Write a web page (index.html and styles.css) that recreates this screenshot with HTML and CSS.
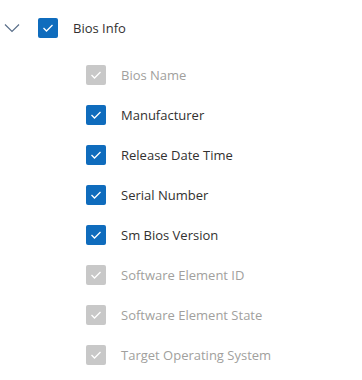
FILE: index.html
```html
<!DOCTYPE html>
<html lang="en">
<head>
  <meta charset="UTF-8">
  <title>Bios Info</title>
  <link rel="stylesheet" href="styles.css">
</head>
<body>
  <div class="tree">
    <div class="row root">
      <span class="chevron">
        <svg width="16" height="10" viewBox="0 0 16 10"><path d="M1 1.5 L8 8.5 L15 1.5" fill="none" stroke="#5a6f8a" stroke-width="1.2"/></svg>
      </span>
      <span class="box on"><svg width="12" height="10" viewBox="0 0 12 10"><path d="M1.5 5 L4.5 8 L10.5 2" fill="none" stroke="#fff" stroke-width="1.3"/></svg></span>
      <span class="label">Bios Info</span>
    </div>
    <div class="children">
      <div class="row off"><span class="box"><svg width="12" height="10" viewBox="0 0 12 10"><path d="M1.5 5 L4.5 8 L10.5 2" fill="none" stroke="#fff" stroke-width="1.3"/></svg></span><span class="label">Bios Name</span></div>
      <div class="row"><span class="box on"><svg width="12" height="10" viewBox="0 0 12 10"><path d="M1.5 5 L4.5 8 L10.5 2" fill="none" stroke="#fff" stroke-width="1.3"/></svg></span><span class="label">Manufacturer</span></div>
      <div class="row"><span class="box on"><svg width="12" height="10" viewBox="0 0 12 10"><path d="M1.5 5 L4.5 8 L10.5 2" fill="none" stroke="#fff" stroke-width="1.3"/></svg></span><span class="label">Release Date Time</span></div>
      <div class="row"><span class="box on"><svg width="12" height="10" viewBox="0 0 12 10"><path d="M1.5 5 L4.5 8 L10.5 2" fill="none" stroke="#fff" stroke-width="1.3"/></svg></span><span class="label">Serial Number</span></div>
      <div class="row"><span class="box on"><svg width="12" height="10" viewBox="0 0 12 10"><path d="M1.5 5 L4.5 8 L10.5 2" fill="none" stroke="#fff" stroke-width="1.3"/></svg></span><span class="label">Sm Bios Version</span></div>
      <div class="row off"><span class="box"><svg width="12" height="10" viewBox="0 0 12 10"><path d="M1.5 5 L4.5 8 L10.5 2" fill="none" stroke="#fff" stroke-width="1.3"/></svg></span><span class="label">Software Element ID</span></div>
      <div class="row off"><span class="box"><svg width="12" height="10" viewBox="0 0 12 10"><path d="M1.5 5 L4.5 8 L10.5 2" fill="none" stroke="#fff" stroke-width="1.3"/></svg></span><span class="label">Software Element State</span></div>
      <div class="row off"><span class="box"><svg width="12" height="10" viewBox="0 0 12 10"><path d="M1.5 5 L4.5 8 L10.5 2" fill="none" stroke="#fff" stroke-width="1.3"/></svg></span><span class="label">Target Operating System</span></div>
    </div>
  </div>
</body>
</html>
```

FILE: styles.css
```css
body {
  margin: 0;
  background: #fff;
  font-family: "Open Sans", Arial, sans-serif;
  font-size: 13px;
  color: #323130;
}
.tree { padding-top: 8px; }
.row {
  display: flex;
  align-items: center;
  height: 40px;
}
.root { padding-left: 4px; }
.chevron { display: flex; width: 34px; }
.children { margin-top: 7px; padding-left: 86px; }
.box {
  width: 20px; height: 20px;
  border-radius: 2px;
  background: #c8c8c8;
  display: flex; align-items: center; justify-content: center;
  flex-shrink: 0;
}
.box.on { background: #0f6cbd; }
.label { margin-left: 15px; }
.root .label { margin-left: 15px; }
.off .label { color: #a19f9d; }
```
